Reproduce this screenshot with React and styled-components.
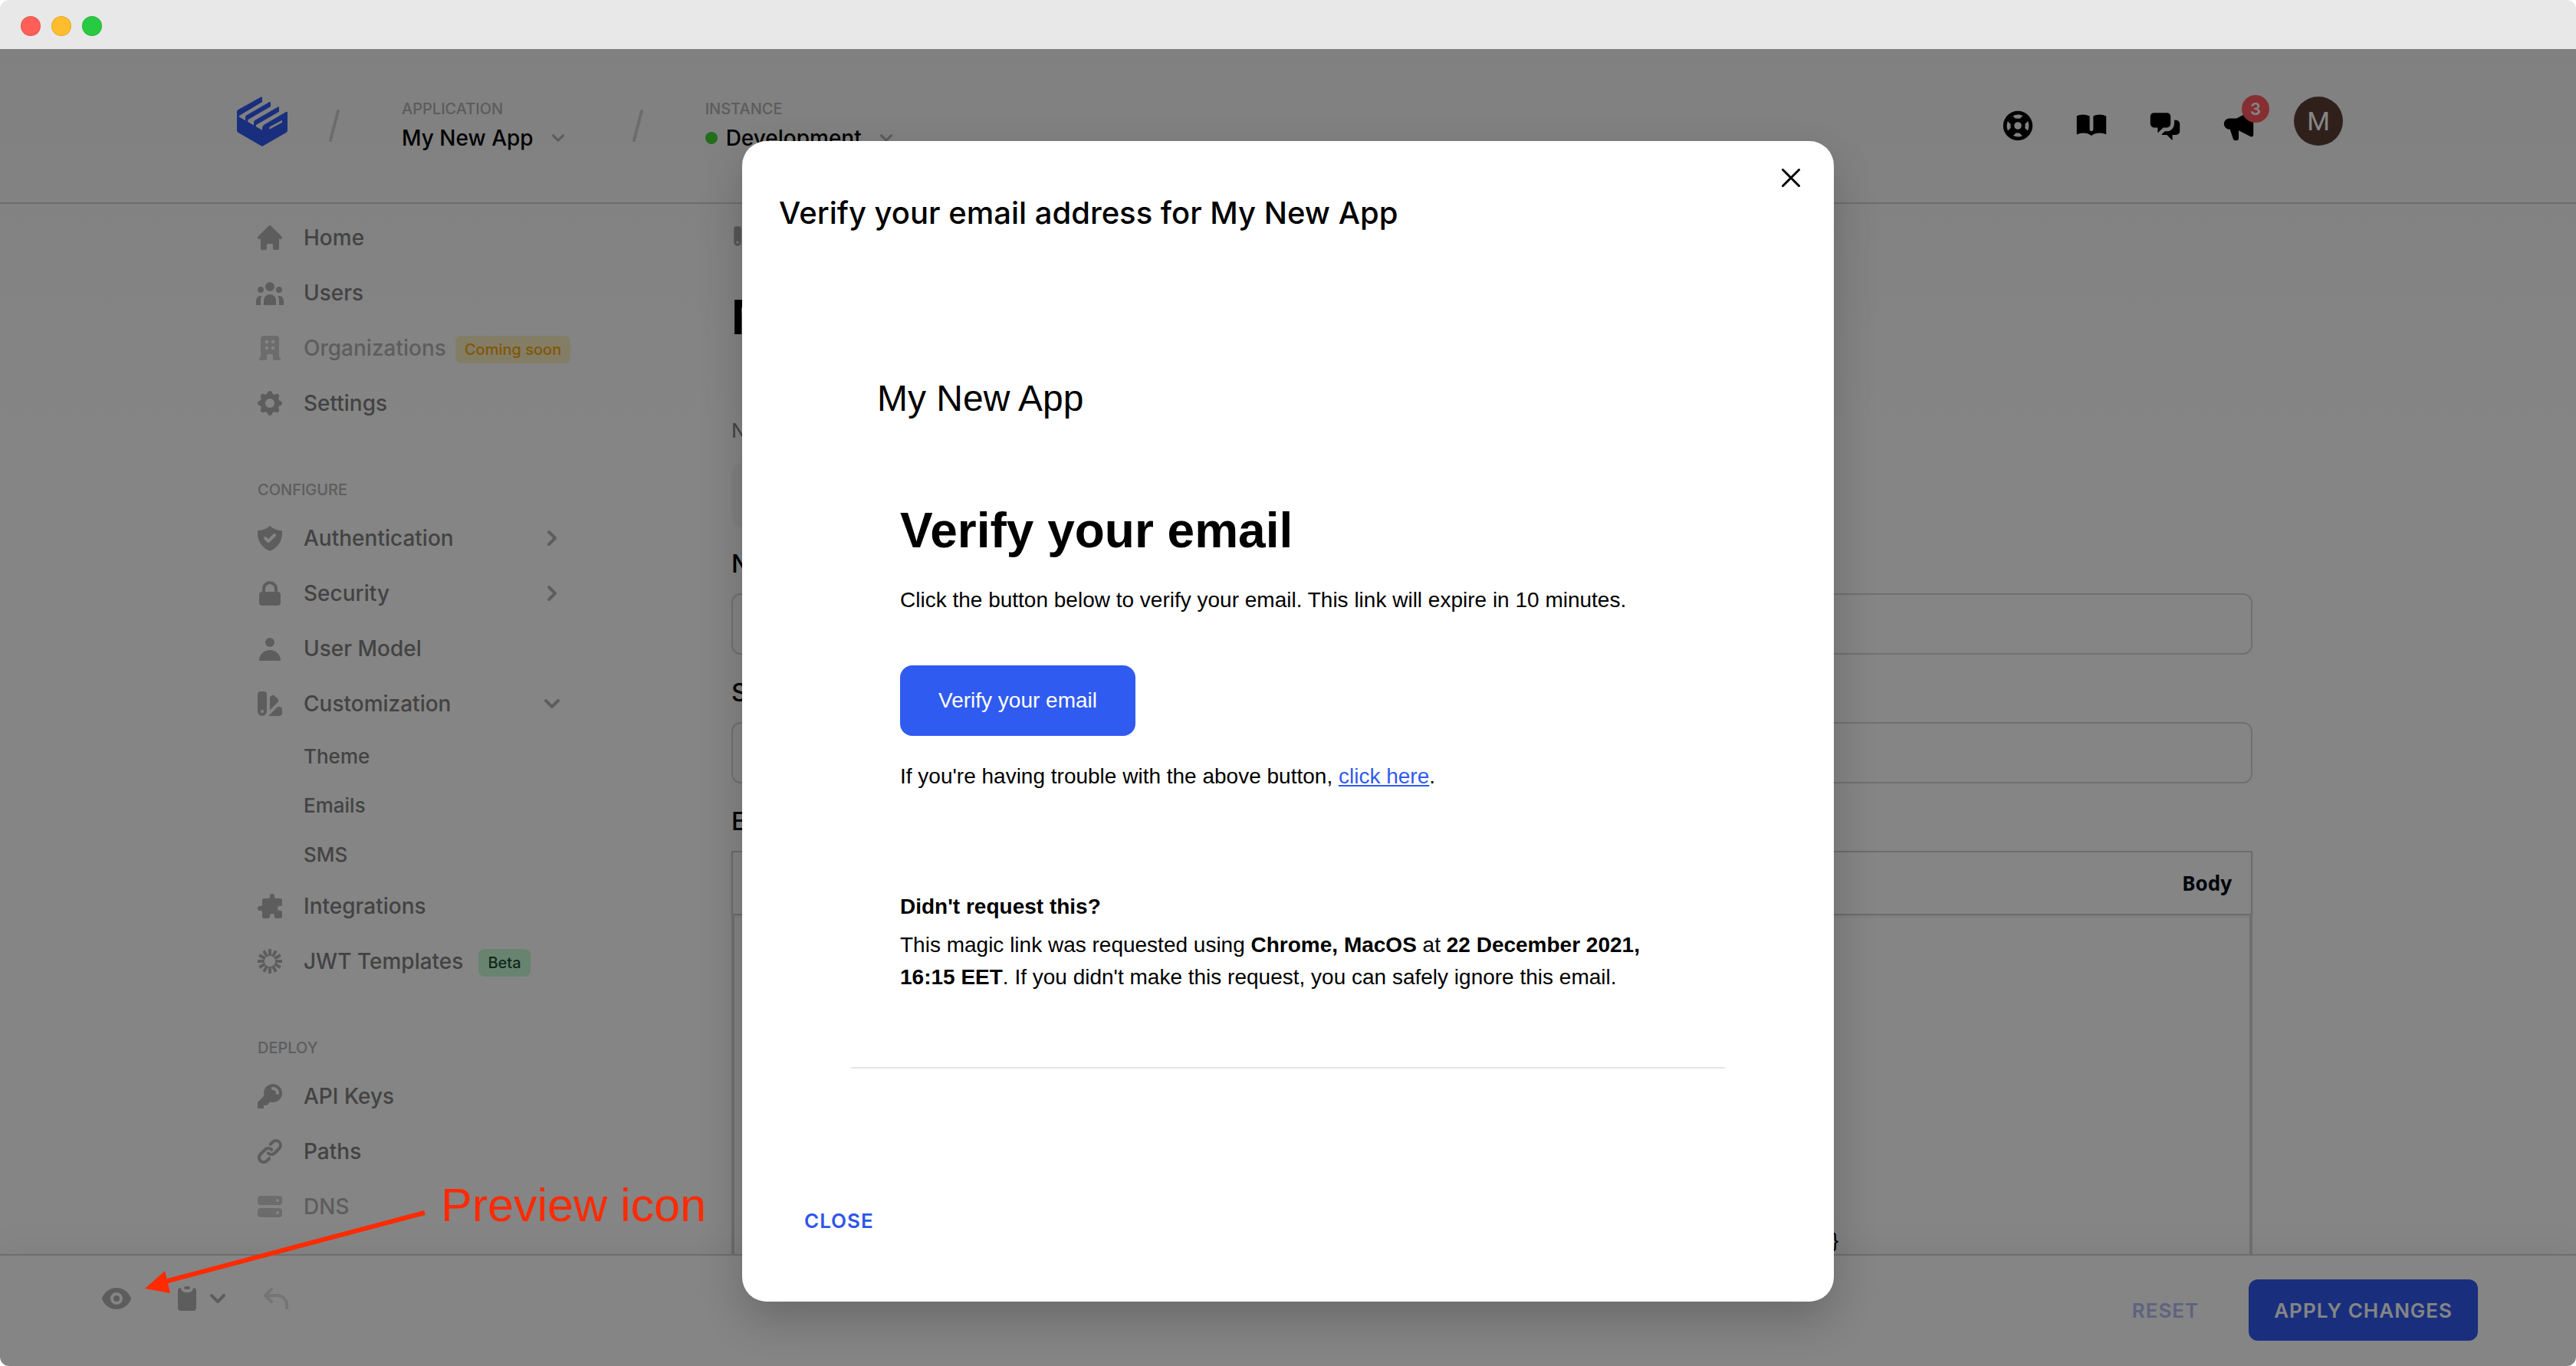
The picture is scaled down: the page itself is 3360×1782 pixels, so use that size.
import React from "react";
import styled, { createGlobalStyle, css } from "styled-components";
import {
  HiHome,
  HiUserGroup,
  HiOfficeBuilding,
  HiCog,
  HiShieldCheck,
  HiLockClosed,
  HiUser,
  HiColorSwatch,
  HiPuzzle,
  HiKey,
  HiLink,
  HiServer,
  HiSupport,
  HiBookOpen,
  HiChatAlt2,
  HiSpeakerphone,
  HiEye,
  HiClipboard,
  HiReply,
  HiChevronDown,
  HiChevronRight,
} from "react-icons/hi";

const ui = `Inter, "Noto Sans", sans-serif`;
const mail = `"Liberation Sans", Arial, sans-serif`;

const GlobalStyle = createGlobalStyle`
  *, *::before, *::after { box-sizing: border-box; }
  body { margin: 0; background: #fff; font-family: ${ui}; }
  h1, h2, p, ul { margin: 0; padding: 0; }
  ul { list-style: none; }
  button { border: 0; background: none; padding: 0; font: inherit; color: inherit; cursor: pointer; }
  svg { display: block; flex: none; }
`;

/* Browser window */

const Window = styled.div`
  position: relative;
  display: flex;
  flex-direction: column;
  height: 100vh;
  overflow: hidden;
  border-radius: 12px;
`;

const TitleBar = styled.div`
  display: flex;
  align-items: center;
  gap: 14px;
  flex: none;
  height: 64px;
  padding: 4px 27px 0;
  background: #e8e8e8;
`;

const TrafficLight = styled.span`
  width: 26px;
  height: 26px;
  border-radius: 50%;
  background: ${(p) => p.$color};
  border: 1px solid rgba(0, 0, 0, 0.1);
`;

const Shell = styled.div`
  position: relative;
  display: flex;
  flex-direction: column;
  flex: 1;
  min-height: 0;
  background: linear-gradient(#f6f6f6, #fff 480px);
`;

/* Header */

const Header = styled.header`
  flex: none;
  border-bottom: 2px solid #d2d2d2;
`;

const HeaderInner = styled.div`
  display: flex;
  align-items: flex-start;
  justify-content: space-between;
  width: 100%;
  max-width: 2752px;
  height: 200px;
  margin: 0 auto;
  padding: 62px 0 0 5px;
`;

const Crumbs = styled.div`
  display: flex;
  align-items: flex-start;
  gap: 81px;
`;

const LogoLink = styled.a`
  margin-right: -27px;
`;

const Slash = styled.svg`
  margin-top: 17px;
`;

const Switcher = styled.div`
  display: flex;
  flex-direction: column;
  gap: 8px;
  padding-top: 4px;
`;

const SwitcherLabel = styled.span`
  font-size: 20px;
  font-weight: 500;
  line-height: 24px;
  color: #b0b0b0;
`;

const SwitcherButton = styled.button`
  display: flex;
  align-items: center;
  font-size: 28px;
  font-weight: 500;
  line-height: 36px;
  color: #000;

  svg {
    margin-left: 16px;
    color: #b0b0b0;
  }
`;

const StatusDot = styled.span`
  width: 16px;
  height: 16px;
  margin-right: 11px;
  border-radius: 50%;
  background: #42d435;
`;

const Actions = styled.div`
  display: flex;
  align-items: flex-start;
  gap: 48px;
`;

const IconAction = styled.button`
  position: relative;
  margin-top: 14px;
  color: #000;
`;

const CountBadge = styled.span`
  position: absolute;
  top: -16px;
  right: -16px;
  width: 36px;
  height: 36px;
  border-radius: 50%;
  background: #ff5a60;
  color: #fff;
  font-size: 22px;
  font-weight: 600;
  line-height: 36px;
  text-align: center;
`;

const Avatar = styled.button`
  width: 64px;
  height: 64px;
  border-radius: 50%;
  background: #5d3f37;
  color: #fff;
  font-family: Roboto, sans-serif;
  font-size: 34px;
  line-height: 64px;
`;

/* Body */

const Body = styled.div`
  display: flex;
  flex: 1;
  min-height: 0;
  width: 100%;
  max-width: 2752px;
  margin: 0 auto;
  overflow: hidden;
`;

const Sidebar = styled.nav`
  flex: none;
  width: 650px;
  padding: 8px 214px 0 28px;
`;

const NavHeading = styled.h2`
  padding: 64px 4px 14px;
  font-size: 20px;
  font-weight: 500;
  line-height: 26px;
  color: #b3b3b3;
`;

const NavLink = styled.a`
  display: flex;
  align-items: center;
  height: 72px;
  font-size: 28px;
  font-weight: 500;
  color: #808080;
  text-decoration: none;
  white-space: nowrap;

  svg {
    color: #b3b3b3;
  }

  ${(p) =>
    p.$muted &&
    css`
      color: #b3b3b3;
      svg {
        color: #cfcfcf;
      }
    `}
`;

const NavText = styled.span`
  margin-left: 24px;
`;

const NavCaret = styled.span`
  margin-left: auto;
`;

const SubLink = styled.a`
  display: flex;
  align-items: center;
  height: 64px;
  padding-left: 64px;
  font-size: 26px;
  font-weight: 500;
  color: #808080;
  text-decoration: none;
`;

const Tag = styled.span`
  margin: 4px 0 0 12px;
  padding: 1px 12px 0;
  border-radius: 8px;
  font-size: 20px;
  font-weight: 500;
  line-height: 35px;

  ${(p) =>
    p.$tone === "green"
      ? css`
          margin-left: 20px;
          background: #c8fcd7;
          color: #1f4a34;
        `
      : css`
          background: #feefc3;
          color: #f5a80c;
        `}
`;

const Main = styled.main`
  display: flex;
  flex-direction: column;
  flex: 1;
  min-width: 0;
  max-width: 1984px;
`;

const Breadcrumb = styled.div`
  display: flex;
  align-items: center;
  gap: 12px;
  padding-top: 24px;
  font-size: 26px;
  line-height: 36px;
  color: #a8a8a8;
`;

const PageTitle = styled.h1`
  padding: 48px 0;
  font-size: 62px;
  font-weight: 700;
  line-height: 80px;
`;

const Note = styled.p`
  padding-top: 42px;
  font-size: 26px;
  line-height: 36px;
  color: #808080;
`;

const Preset = styled.div`
  width: 60%;
  height: 84px;
  margin: 24px 0 28px;
  border-radius: 16px;
  background: #f5f5f5;
`;

const Field = styled.div`
  display: flex;
  flex-direction: column;
  gap: 18px;
  padding-bottom: 30px;
`;

const FieldLabel = styled.label`
  font-size: 32px;
  font-weight: 500;
  line-height: 40px;
`;

const Input = styled.input`
  width: 100%;
  height: 80px;
  padding: 0 24px;
  border: 2px solid #d6d6d6;
  border-radius: 12px;
  background: transparent;
  font: 500 28px ${ui};
`;

const Editor = styled.section`
  display: flex;
  flex-direction: column;
  flex: 1;
  min-height: 0;
  margin-top: 18px;
`;

const EditorBar = styled.div`
  display: flex;
  align-items: center;
  justify-content: flex-end;
  flex: none;
  height: 84px;
  padding: 0 25px;
  border: 2px solid #cfcfcf;
  box-shadow: 0 2px 4px rgba(0, 0, 0, 0.08);
  font-family: "Noto Sans", sans-serif;
  font-size: 26px;
  font-weight: 700;
  color: #000a1a;
`;

const EditorBody = styled.div`
  display: flex;
  align-items: flex-end;
  justify-content: flex-end;
  flex: 1;
  padding: 0 536px 0 24px;
  border: solid #d6d6d6;
  border-width: 0 4px;
  font-family: ${mail};
  font-size: 26px;
  line-height: 36px;
`;

/* Bottom toolbar */

const BottomBar = styled.footer`
  display: flex;
  align-items: flex-start;
  justify-content: space-between;
  flex: none;
  height: 146px;
  padding: 31px 128px 0 132px;
  border-top: 2px solid #d2d2d2;
  background: #fff;
  box-shadow: 0 -8px 48px rgba(0, 0, 0, 0.05);
`;

const Tools = styled.div`
  display: flex;
  padding-top: 5px;
  color: #b3b3b3;
`;

const Tool = styled.button`
  display: flex;
  margin-right: ${(p) => p.$after}px;
  color: ${(p) => (p.disabled ? "#e0e0e0" : "#b3b3b3")};
`;

const Decisions = styled.div`
  display: flex;
  gap: 32px;
`;

const TextButton = styled.button`
  height: 80px;
  padding: 0 33px;
  border-radius: 12px;
  font-size: 26px;
  font-weight: 600;
  letter-spacing: 1px;
  text-transform: uppercase;
  background: ${(p) => (p.$solid ? "#305bf0" : "transparent")};
  color: ${(p) => (p.$solid ? "#fff" : p.disabled ? "#b4bef5" : "#2f55eb")};
`;

/* Dialog */

const Overlay = styled.div`
  position: absolute;
  inset: 0;
  display: flex;
  align-items: flex-start;
  justify-content: center;
  padding-top: 120px;
  background: rgba(0, 0, 0, 0.48);
`;

const Dialog = styled.div`
  position: relative;
  width: 1424px;
  max-width: 100%;
  padding: 70px 48px 66px;
  border-radius: 32px;
  background: #fff;
  box-shadow: 0 24px 56px rgba(0, 0, 0, 0.2);
`;

const DialogClose = styled.button`
  position: absolute;
  top: 36px;
  right: 44px;
`;

const DialogTitle = styled.h2`
  font-size: 40px;
  font-weight: 500;
  line-height: 48px;
`;

const Email = styled.article`
  margin: 190px 94px 158px;
  border-bottom: 2px solid #e5e5e5;
  font-family: ${mail};
  font-size: 28px;
  line-height: 42px;
  color: #000;
`;

const EmailBrand = styled.p`
  padding: 0 34px;
  font-size: 48px;
  line-height: 56px;
`;

const EmailBody = styled.div`
  padding: 108px 64px 96px;
`;

const EmailHeading = styled.h1`
  margin-bottom: 34px;
  font-size: 64px;
  font-weight: 700;
  line-height: 72px;
`;

const EmailButton = styled.button`
  display: block;
  height: 92px;
  margin: 64px 0 32px;
  padding: 0 50px;
  border-radius: 16px;
  background: #305bf0;
  color: #fff;
`;

const EmailLink = styled.a`
  color: #305bf0;
`;

const EmailNotice = styled.p`
  margin: 128px 0 8px;
  font-weight: 700;
`;

/* Callout drawn over the window */

const Callout = styled.div`
  position: absolute;
  left: 189px;
  bottom: 94px;
  display: flex;
  align-items: flex-end;
  gap: 20px;
  color: #ff2a00;
  font-family: ${mail};
  font-size: 61px;
  line-height: 72px;
`;

const CalloutText = styled.span`
  padding-bottom: 80px;
`;

function Logo() {
  return (
    <svg width="66" height="65" viewBox="57 47 198 195" fill="#305bf0">
      <path
        fillRule="evenodd"
        d="M57 106Q57 102 61 99L150 49Q156 46 156 52V68L66 122Q64 125 67 127L156 178V170Q156 162 163 157L249 107Q255 104 255 110V180Q255 184 251 187L160 240Q156 243 152 240L61 187Q57 184 57 180ZM184 175V169Q184 166 188 164L234 139V148Z"
      />
      <path d="M90 141V128Q90 123 95 120L183 69Q189 66 189 71V86L100 138V148Z" />
      <path d="M123 160V147Q123 142 128 139L216 88Q222 85 222 90V106L132 158V166Z" />
    </svg>
  );
}

function Divider() {
  return (
    <Slash width="14" height="42" viewBox="0 0 14 42" stroke="#cfcfcf" strokeWidth="4">
      <path d="M12.5 0 1.5 42" />
    </Slash>
  );
}

function BurstIcon() {
  return (
    <svg width="40" height="40" viewBox="-20 -20 40 40" stroke="currentColor" strokeWidth="4">
      {Array.from({ length: 12 }, (_, i) => (
        <path key={i} d="M0-7V-16" transform={`rotate(${i * 30})`} />
      ))}
    </svg>
  );
}

function NavItem({ icon: Icon, label, muted, caret: Caret, tag, tone }) {
  return (
    <li>
      <NavLink href="#" $muted={muted}>
        <Icon size={40} />
        <NavText>{label}</NavText>
        {tag && <Tag $tone={tone}>{tag}</Tag>}
        {Caret && (
          <NavCaret>
            <Caret size={40} />
          </NavCaret>
        )}
      </NavLink>
    </li>
  );
}

const overview = [
  { icon: HiHome, label: "Home" },
  { icon: HiUserGroup, label: "Users" },
  { icon: HiOfficeBuilding, label: "Organizations", muted: true, tag: "Coming soon" },
  { icon: HiCog, label: "Settings" },
];

const configure = [
  { icon: HiShieldCheck, label: "Authentication", caret: HiChevronRight },
  { icon: HiLockClosed, label: "Security", caret: HiChevronRight },
  { icon: HiUser, label: "User Model" },
  { icon: HiColorSwatch, label: "Customization", caret: HiChevronDown },
];

const customization = ["Theme", "Emails", "SMS"];

const extend = [
  { icon: HiPuzzle, label: "Integrations" },
  { icon: BurstIcon, label: "JWT Templates", tag: "Beta", tone: "green" },
];

const deploy = [
  { icon: HiKey, label: "API Keys" },
  { icon: HiLink, label: "Paths" },
  { icon: HiServer, label: "DNS", muted: true },
];

const renderItems = (items) => items.map((item) => <NavItem key={item.label} {...item} />);

export default function App() {
  return (
    <>
      <GlobalStyle />
      <Window>
        <TitleBar>
          <TrafficLight $color="#ff5f57" />
          <TrafficLight $color="#ffbd2e" />
          <TrafficLight $color="#28ca41" />
        </TitleBar>
        <Shell>
          <Header>
            <HeaderInner>
              <Crumbs>
                <LogoLink href="#" aria-label="Dashboard">
                  <Logo />
                </LogoLink>
                <Divider />
                <Switcher>
                  <SwitcherLabel>APPLICATION</SwitcherLabel>
                  <SwitcherButton>
                    My New App
                    <HiChevronDown size={32} />
                  </SwitcherButton>
                </Switcher>
                <Divider />
                <Switcher>
                  <SwitcherLabel>INSTANCE</SwitcherLabel>
                  <SwitcherButton>
                    <StatusDot />
                    Development
                    <HiChevronDown size={32} />
                  </SwitcherButton>
                </Switcher>
              </Crumbs>
              <Actions>
                <IconAction aria-label="Support">
                  <HiSupport size={48} />
                </IconAction>
                <IconAction aria-label="Documentation">
                  <HiBookOpen size={48} />
                </IconAction>
                <IconAction aria-label="Community">
                  <HiChatAlt2 size={48} />
                </IconAction>
                <IconAction aria-label="Announcements">
                  <HiSpeakerphone size={48} />
                  <CountBadge>3</CountBadge>
                </IconAction>
                <Avatar>M</Avatar>
              </Actions>
            </HeaderInner>
          </Header>

          <Body>
            <Sidebar>
              <ul>{renderItems(overview)}</ul>
              <NavHeading>CONFIGURE</NavHeading>
              <ul>
                {renderItems(configure)}
                {customization.map((label) => (
                  <li key={label}>
                    <SubLink href="#">{label}</SubLink>
                  </li>
                ))}
                {renderItems(extend)}
              </ul>
              <NavHeading>DEPLOY</NavHeading>
              <ul>{renderItems(deploy)}</ul>
            </Sidebar>

            <Main>
              <Breadcrumb>
                <HiColorSwatch size={32} />
                Emails
              </Breadcrumb>
              <PageTitle>Magic link</PageTitle>
              <Note>Name</Note>
              <Preset />
              <Field>
                <FieldLabel htmlFor="name">Name</FieldLabel>
                <Input id="name" />
              </Field>
              <Field>
                <FieldLabel htmlFor="subject">Subject</FieldLabel>
                <Input id="subject" />
              </Field>
              <FieldLabel as="span">Email</FieldLabel>
              <Editor>
                <EditorBar>Body</EditorBar>
                <EditorBody>{"{{app.name}}"}</EditorBody>
              </Editor>
            </Main>
          </Body>

          <BottomBar>
            <Tools>
              <Tool $after={52} aria-label="Preview">
                <HiEye size={40} />
              </Tool>
              <Tool $after={36} aria-label="Paste">
                <HiClipboard size={40} />
                <HiChevronDown size={40} />
              </Tool>
              <Tool $after={0} aria-label="Undo" disabled>
                <HiReply size={40} />
              </Tool>
            </Tools>
            <Decisions>
              <TextButton disabled>Reset</TextButton>
              <TextButton $solid>Apply changes</TextButton>
            </Decisions>
          </BottomBar>

          <Overlay>
            <Dialog role="dialog" aria-modal="true" aria-labelledby="dialog-title">
              <DialogClose aria-label="Close dialog">
                <svg width="24" height="24" viewBox="0 0 24 24" stroke="#000" strokeWidth="3" strokeLinecap="round">
                  <path d="M1.5 1.5l21 21M22.5 1.5l-21 21" />
                </svg>
              </DialogClose>
              <DialogTitle id="dialog-title">Verify your email address for My New App</DialogTitle>
              <Email>
                <EmailBrand>My New App</EmailBrand>
                <EmailBody>
                  <EmailHeading>Verify your email</EmailHeading>
                  <p>Click the button below to verify your email. This link will expire in 10 minutes.</p>
                  <EmailButton>Verify your email</EmailButton>
                  <p>
                    If you're having trouble with the above button, <EmailLink href="#">click here</EmailLink>.
                  </p>
                  <EmailNotice>Didn't request this?</EmailNotice>
                  <p>
                    This magic link was requested using <b>Chrome, MacOS</b> at <b>22 December 2021, 16:15 EET</b>. If
                    you didn't make this request, you can safely ignore this email.
                  </p>
                </EmailBody>
              </Email>
              <TextButton>Close</TextButton>
            </Dialog>
          </Overlay>
        </Shell>

        <Callout>
          <svg width="366" height="110" viewBox="0 0 366 110">
            <path d="M365 4 22 95" stroke="#ff2a00" strokeWidth="6" fill="none" />
            <path d="M0 103 26 80 33 109Z" fill="#ff2a00" />
          </svg>
          <CalloutText>Preview icon</CalloutText>
        </Callout>
      </Window>
    </>
  );
}
